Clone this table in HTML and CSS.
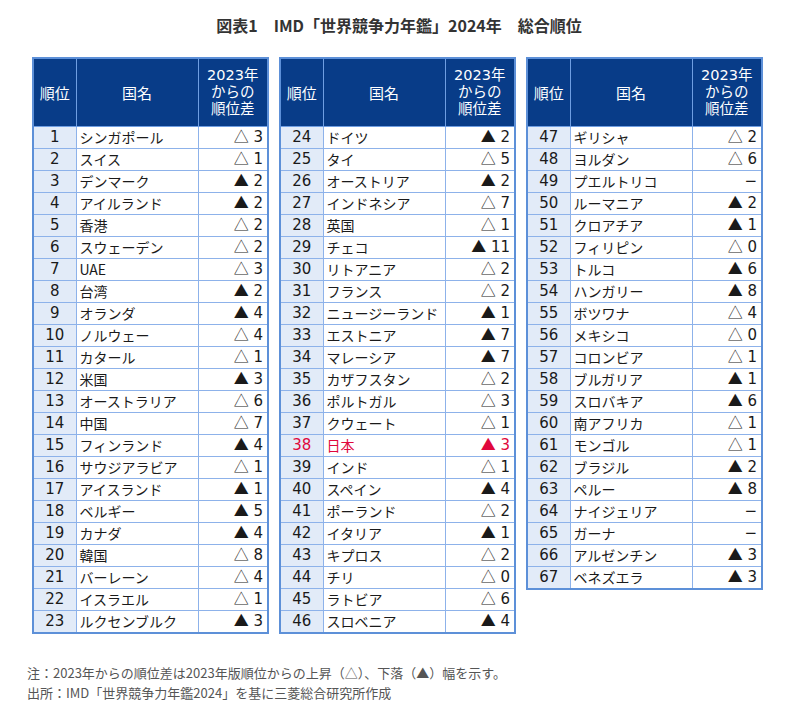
FILE: index.html
```html
<!DOCTYPE html>
<html lang="ja">
<head>
<meta charset="utf-8">
<title>IMD世界競争力年鑑2024 総合順位</title>
<link rel="stylesheet" href="styles.css">
</head>
<body>
<div class="page">
  <h1 class="title">図表1　IMD「世界競争力年鑑」2024年　総合順位</h1>
  <div class="tables">
    <table class="rank-table">
      <colgroup><col class="c-rank"><col class="c-name"><col class="c-diff"></colgroup>
      <thead><tr><th>順位</th><th>国名</th><th class="h-diff">2023年<br>からの<br>順位差</th></tr></thead>
      <tbody>
        <tr><td class="rk">1</td><td class="nm">シンガポール</td><td class="df"><span class="up">△</span> 3</td></tr>
        <tr><td class="rk">2</td><td class="nm">スイス</td><td class="df"><span class="up">△</span> 1</td></tr>
        <tr><td class="rk">3</td><td class="nm">デンマーク</td><td class="df"><span class="dn">▲</span> 2</td></tr>
        <tr><td class="rk">4</td><td class="nm">アイルランド</td><td class="df"><span class="dn">▲</span> 2</td></tr>
        <tr><td class="rk">5</td><td class="nm">香港</td><td class="df"><span class="up">△</span> 2</td></tr>
        <tr><td class="rk">6</td><td class="nm">スウェーデン</td><td class="df"><span class="up">△</span> 2</td></tr>
        <tr><td class="rk">7</td><td class="nm">UAE</td><td class="df"><span class="up">△</span> 3</td></tr>
        <tr><td class="rk">8</td><td class="nm">台湾</td><td class="df"><span class="dn">▲</span> 2</td></tr>
        <tr><td class="rk">9</td><td class="nm">オランダ</td><td class="df"><span class="dn">▲</span> 4</td></tr>
        <tr><td class="rk">10</td><td class="nm">ノルウェー</td><td class="df"><span class="up">△</span> 4</td></tr>
        <tr><td class="rk">11</td><td class="nm">カタール</td><td class="df"><span class="up">△</span> 1</td></tr>
        <tr><td class="rk">12</td><td class="nm">米国</td><td class="df"><span class="dn">▲</span> 3</td></tr>
        <tr><td class="rk">13</td><td class="nm">オーストラリア</td><td class="df"><span class="up">△</span> 6</td></tr>
        <tr><td class="rk">14</td><td class="nm">中国</td><td class="df"><span class="up">△</span> 7</td></tr>
        <tr><td class="rk">15</td><td class="nm">フィンランド</td><td class="df"><span class="dn">▲</span> 4</td></tr>
        <tr><td class="rk">16</td><td class="nm">サウジアラビア</td><td class="df"><span class="up">△</span> 1</td></tr>
        <tr><td class="rk">17</td><td class="nm">アイスランド</td><td class="df"><span class="dn">▲</span> 1</td></tr>
        <tr><td class="rk">18</td><td class="nm">ベルギー</td><td class="df"><span class="dn">▲</span> 5</td></tr>
        <tr><td class="rk">19</td><td class="nm">カナダ</td><td class="df"><span class="dn">▲</span> 4</td></tr>
        <tr><td class="rk">20</td><td class="nm">韓国</td><td class="df"><span class="up">△</span> 8</td></tr>
        <tr><td class="rk">21</td><td class="nm">バーレーン</td><td class="df"><span class="up">△</span> 4</td></tr>
        <tr><td class="rk">22</td><td class="nm">イスラエル</td><td class="df"><span class="up">△</span> 1</td></tr>
        <tr><td class="rk">23</td><td class="nm">ルクセンブルク</td><td class="df"><span class="dn">▲</span> 3</td></tr>
      </tbody>
    </table>
    <table class="rank-table">
      <colgroup><col class="c-rank"><col class="c-name"><col class="c-diff"></colgroup>
      <thead><tr><th>順位</th><th>国名</th><th class="h-diff">2023年<br>からの<br>順位差</th></tr></thead>
      <tbody>
        <tr><td class="rk">24</td><td class="nm">ドイツ</td><td class="df"><span class="dn">▲</span> 2</td></tr>
        <tr><td class="rk">25</td><td class="nm">タイ</td><td class="df"><span class="up">△</span> 5</td></tr>
        <tr><td class="rk">26</td><td class="nm">オーストリア</td><td class="df"><span class="dn">▲</span> 2</td></tr>
        <tr><td class="rk">27</td><td class="nm">インドネシア</td><td class="df"><span class="up">△</span> 7</td></tr>
        <tr><td class="rk">28</td><td class="nm">英国</td><td class="df"><span class="up">△</span> 1</td></tr>
        <tr><td class="rk">29</td><td class="nm">チェコ</td><td class="df"><span class="dn">▲</span> 11</td></tr>
        <tr><td class="rk">30</td><td class="nm">リトアニア</td><td class="df"><span class="up">△</span> 2</td></tr>
        <tr><td class="rk">31</td><td class="nm">フランス</td><td class="df"><span class="up">△</span> 2</td></tr>
        <tr><td class="rk">32</td><td class="nm">ニュージーランド</td><td class="df"><span class="dn">▲</span> 1</td></tr>
        <tr><td class="rk">33</td><td class="nm">エストニア</td><td class="df"><span class="dn">▲</span> 7</td></tr>
        <tr><td class="rk">34</td><td class="nm">マレーシア</td><td class="df"><span class="dn">▲</span> 7</td></tr>
        <tr><td class="rk">35</td><td class="nm">カザフスタン</td><td class="df"><span class="up">△</span> 2</td></tr>
        <tr><td class="rk">36</td><td class="nm">ポルトガル</td><td class="df"><span class="up">△</span> 3</td></tr>
        <tr><td class="rk">37</td><td class="nm">クウェート</td><td class="df"><span class="up">△</span> 1</td></tr>
        <tr class="japan"><td class="rk">38</td><td class="nm">日本</td><td class="df"><span class="dn">▲</span> 3</td></tr>
        <tr><td class="rk">39</td><td class="nm">インド</td><td class="df"><span class="up">△</span> 1</td></tr>
        <tr><td class="rk">40</td><td class="nm">スペイン</td><td class="df"><span class="dn">▲</span> 4</td></tr>
        <tr><td class="rk">41</td><td class="nm">ポーランド</td><td class="df"><span class="up">△</span> 2</td></tr>
        <tr><td class="rk">42</td><td class="nm">イタリア</td><td class="df"><span class="dn">▲</span> 1</td></tr>
        <tr><td class="rk">43</td><td class="nm">キプロス</td><td class="df"><span class="up">△</span> 2</td></tr>
        <tr><td class="rk">44</td><td class="nm">チリ</td><td class="df"><span class="up">△</span> 0</td></tr>
        <tr><td class="rk">45</td><td class="nm">ラトビア</td><td class="df"><span class="up">△</span> 6</td></tr>
        <tr><td class="rk">46</td><td class="nm">スロベニア</td><td class="df"><span class="dn">▲</span> 4</td></tr>
      </tbody>
    </table>
    <table class="rank-table">
      <colgroup><col class="c-rank"><col class="c-name"><col class="c-diff"></colgroup>
      <thead><tr><th>順位</th><th>国名</th><th class="h-diff">2023年<br>からの<br>順位差</th></tr></thead>
      <tbody>
        <tr><td class="rk">47</td><td class="nm">ギリシャ</td><td class="df"><span class="up">△</span> 2</td></tr>
        <tr><td class="rk">48</td><td class="nm">ヨルダン</td><td class="df"><span class="up">△</span> 6</td></tr>
        <tr><td class="rk">49</td><td class="nm">プエルトリコ</td><td class="df">−</td></tr>
        <tr><td class="rk">50</td><td class="nm">ルーマニア</td><td class="df"><span class="dn">▲</span> 2</td></tr>
        <tr><td class="rk">51</td><td class="nm">クロアチア</td><td class="df"><span class="dn">▲</span> 1</td></tr>
        <tr><td class="rk">52</td><td class="nm">フィリピン</td><td class="df"><span class="up">△</span> 0</td></tr>
        <tr><td class="rk">53</td><td class="nm">トルコ</td><td class="df"><span class="dn">▲</span> 6</td></tr>
        <tr><td class="rk">54</td><td class="nm">ハンガリー</td><td class="df"><span class="dn">▲</span> 8</td></tr>
        <tr><td class="rk">55</td><td class="nm">ボツワナ</td><td class="df"><span class="up">△</span> 4</td></tr>
        <tr><td class="rk">56</td><td class="nm">メキシコ</td><td class="df"><span class="up">△</span> 0</td></tr>
        <tr><td class="rk">57</td><td class="nm">コロンビア</td><td class="df"><span class="up">△</span> 1</td></tr>
        <tr><td class="rk">58</td><td class="nm">ブルガリア</td><td class="df"><span class="dn">▲</span> 1</td></tr>
        <tr><td class="rk">59</td><td class="nm">スロバキア</td><td class="df"><span class="dn">▲</span> 6</td></tr>
        <tr><td class="rk">60</td><td class="nm">南アフリカ</td><td class="df"><span class="up">△</span> 1</td></tr>
        <tr><td class="rk">61</td><td class="nm">モンゴル</td><td class="df"><span class="up">△</span> 1</td></tr>
        <tr><td class="rk">62</td><td class="nm">ブラジル</td><td class="df"><span class="dn">▲</span> 2</td></tr>
        <tr><td class="rk">63</td><td class="nm">ペルー</td><td class="df"><span class="dn">▲</span> 8</td></tr>
        <tr><td class="rk">64</td><td class="nm">ナイジェリア</td><td class="df">−</td></tr>
        <tr><td class="rk">65</td><td class="nm">ガーナ</td><td class="df">−</td></tr>
        <tr><td class="rk">66</td><td class="nm">アルゼンチン</td><td class="df"><span class="dn">▲</span> 3</td></tr>
        <tr><td class="rk">67</td><td class="nm">ベネズエラ</td><td class="df"><span class="dn">▲</span> 3</td></tr>
      </tbody>
    </table>
  </div>
  <div class="notes">
    <p>注：2023年からの順位差は2023年版順位からの上昇（△）、下落（▲）幅を示す。</p>
    <p>出所：IMD「世界競争力年鑑2024」を基に三菱総合研究所作成</p>
  </div>
</div>
</body>
</html>
```
FILE: styles.css
```css
html, body {
  margin: 0;
  padding: 0;
  background: #ffffff;
}

.page {
  width: 804px;
  font-family: "Noto Sans CJK JP", "Noto Sans", sans-serif;
  color: #1a1a1a;
}

.title {
  margin: 0;
  padding: 13px 6px 0 0;
  height: 24px;
  line-height: 24px;
  font-size: 16px;
  font-weight: 700;
  color: #333333;
  text-align: center;
}

.tables {
  display: flex;
  align-items: flex-start;
  gap: 10px;
  padding-left: 32px;
  margin-top: 20px;
}

.rank-table {
  width: 235px;
  table-layout: fixed;
  border-collapse: collapse;
  border: 2px solid #5d90d8;
  font-family: "DejaVu Sans", "Noto Sans CJK JP", sans-serif;
}

.c-rank { width: 43px; }
.c-name { width: 122px; }
.c-diff { width: 70px; }

.rank-table th {
  background: #083c88;
  color: #ffffff;
  font-family: "Noto Sans CJK JP", sans-serif;
  font-weight: 400;
  font-size: 15px;
  height: 67px;
  padding: 0;
  border: 1px solid #6f9ee2;
  text-align: center;
  vertical-align: middle;
}

.rank-table th.h-diff {
  line-height: 17px;
  font-family: "DejaVu Sans", "Noto Sans CJK JP", sans-serif;
  font-size: 14.5px;
}

.rank-table td {
  height: 21px;
  padding: 0;
  border: 1px solid #8db2ea;
  font-size: 15px;
  line-height: 21px;
  white-space: nowrap;
  overflow: hidden;
  color: #1a1a1a;
}

.rank-table td.rk {
  background: #e2ebf8;
  text-align: center;
}

.rank-table td.nm {
  padding-left: 3px;
  font-family: "Noto Sans CJK JP", sans-serif;
  font-size: 14px;
}

.rank-table td.df {
  text-align: right;
  padding-right: 4px;
}

.up, .dn {
  font-family: "Noto Sans CJK JP", sans-serif;
  font-size: 15px;
  line-height: 0;
}

.rank-table tr.japan td {
  color: #e0083c;
}

.notes {
  margin-top: 29px;
  padding-left: 27px;
  font-size: 13px;
  line-height: 20px;
  color: #555555;
}

.notes p {
  margin: 0;
}
```
